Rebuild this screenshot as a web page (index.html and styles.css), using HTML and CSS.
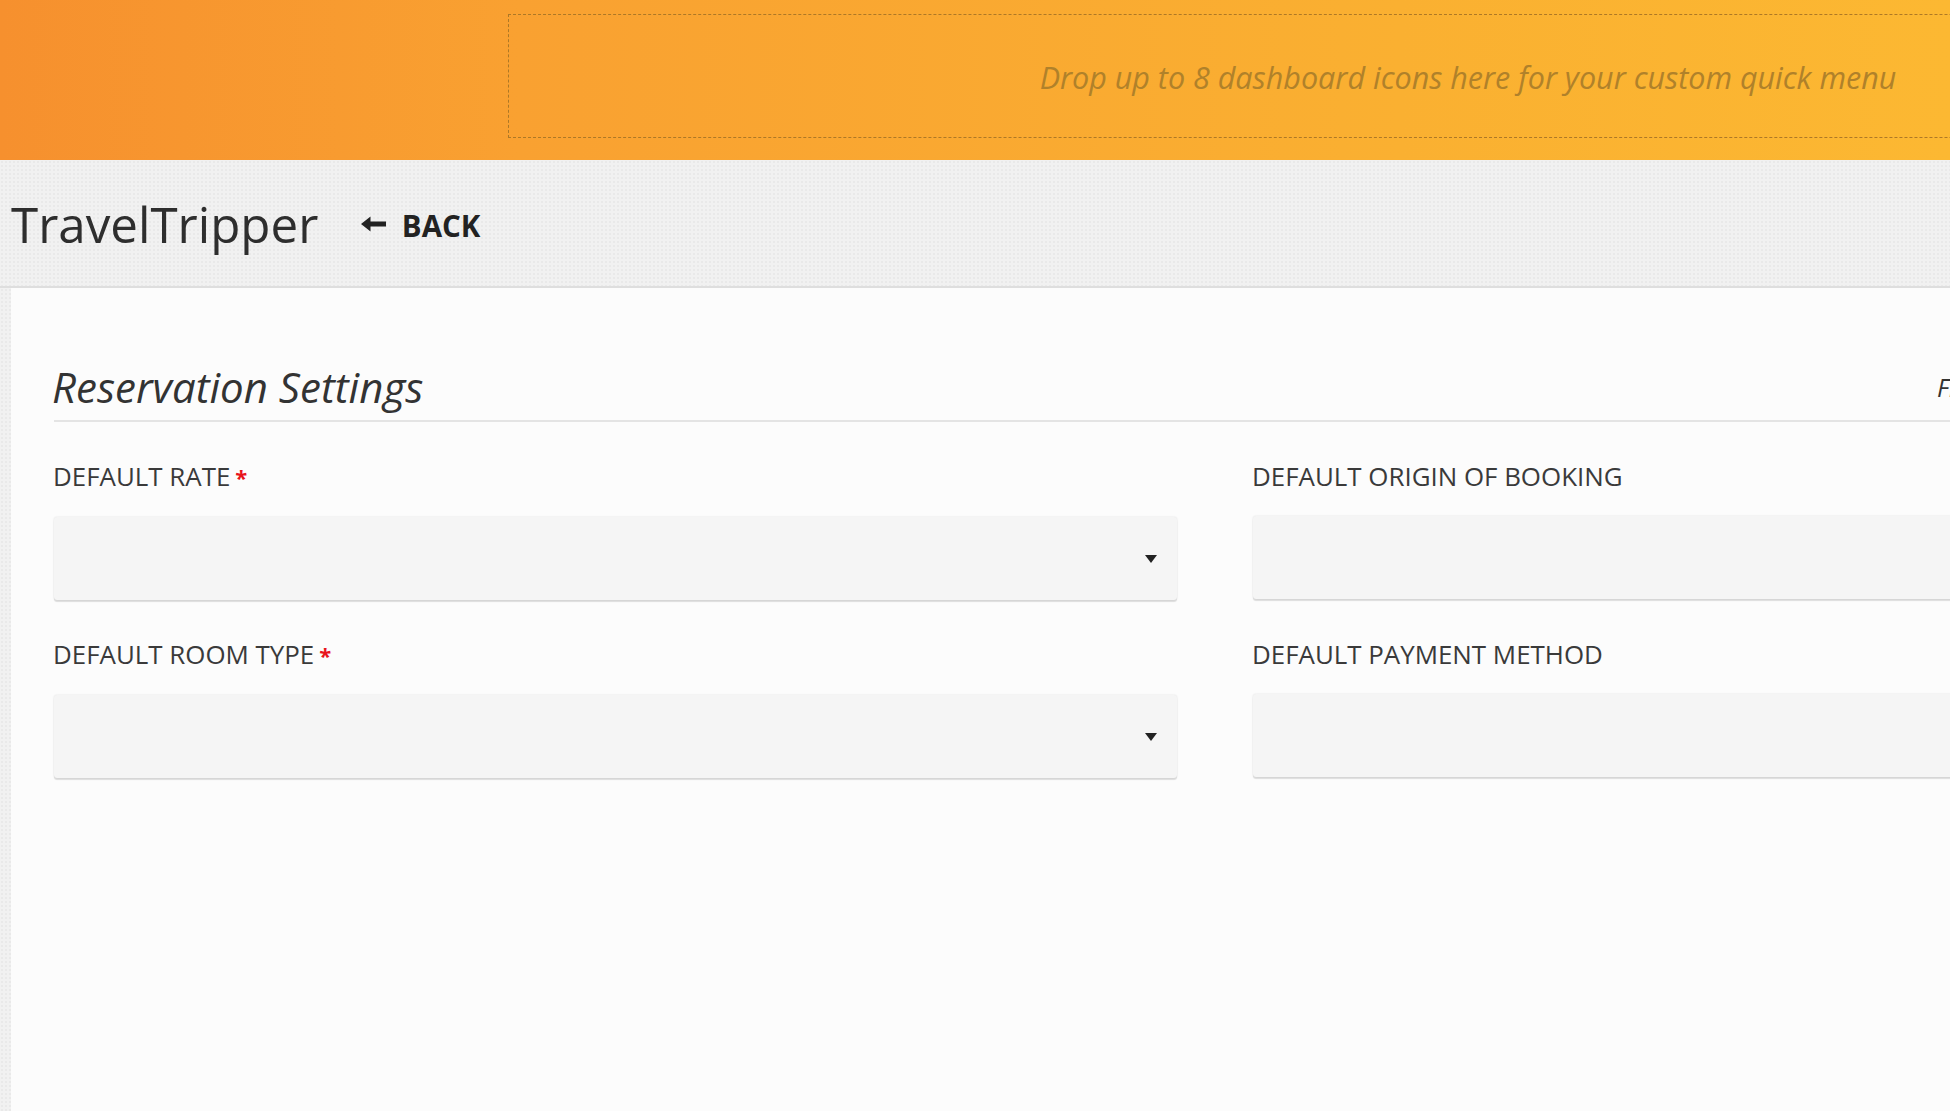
FILE: index.html
```html
<!DOCTYPE html>
<html lang="en">
<head>
<meta charset="utf-8">
<title>TravelTripper - Reservation Settings</title>
<link rel="stylesheet" href="styles.css">
</head>
<body>
<div class="page">
  <header class="quickbar">
    <div class="dropzone">
      <span class="dropzone-text">Drop up to 8 dashboard icons here for your custom quick menu</span>
    </div>
  </header>

  <div class="topbar">
    <h1 class="brand">TravelTripper</h1>
    <a class="back" href="#">
      <svg class="back-icon" viewBox="0 0 25 16" width="25" height="16" aria-hidden="true">
        <path d="M0 8 L9.5 0.5 L9.5 5.6 L25 5.6 L25 10.4 L9.5 10.4 L9.5 15.5 Z" fill="#222"/>
      </svg>
      <span>BACK</span>
    </a>
  </div>

  <main class="panel">
    <div class="section-head">
      <h2 class="section-title">Reservation Settings</h2>
      <span class="section-note">Fields marked with * are required</span>
    </div>

    <div class="form-grid">
      <div class="field">
        <label class="field-label">Default Rate<span class="req">*</span></label>
        <div class="select"><span class="caret"></span></div>
      </div>
      <div class="field">
        <label class="field-label">Default Origin of Booking</label>
        <div class="select"><span class="caret"></span></div>
      </div>
      <div class="field">
        <label class="field-label">Default Room Type<span class="req">*</span></label>
        <div class="select"><span class="caret"></span></div>
      </div>
      <div class="field">
        <label class="field-label">Default Payment Method</label>
        <div class="select"><span class="caret"></span></div>
      </div>
    </div>
  </main>
</div>
</body>
</html>
```

FILE: styles.css
```css
html, body {
  margin: 0;
  padding: 0;
  height: 100%;
  overflow: hidden;
  background: #f2f2f2;
}

body {
  font-family: "Open Sans", "Liberation Sans", sans-serif;
  color: #333;
}

.page {
  width: 2440px;
  min-height: 100vh;
  display: flex;
  flex-direction: column;
  background-color: #f1f1f1;
  background-image: radial-gradient(rgba(0, 0, 0, 0.03) 1px, transparent 1.2px);
  background-size: 4px 4px;
}

/* ---------- orange quick menu bar ---------- */
.quickbar {
  height: 160px;
  box-sizing: border-box;
  padding: 14px 12px 22px 508px;
  display: flex;
  background: linear-gradient(90deg, #f6902e 0px, #f9a131 520px, #fab031 1400px, #fcb832 1950px, #fcba33 2440px);
}

.dropzone {
  flex: 1;
  border: 1px dashed #ad7826;
  display: flex;
  align-items: center;
  justify-content: center;
}

.dropzone-text {
  font-style: italic;
  font-size: 30.5px;
  color: #b0812a;
  white-space: nowrap;
  padding-top: 2px;
}

/* ---------- gray top bar ---------- */
.topbar {
  height: 126px;
  box-sizing: content-box;
  border-bottom: 2px solid #dedede;
  display: flex;
  align-items: center;
  padding-left: 11px;
}

.brand {
  margin: 0;
  font-size: 49.3px;
  font-weight: 400;
  line-height: normal;
  color: #2e2e2e;
}

.back {
  display: inline-flex;
  align-items: center;
  margin-left: 42.5px;
  margin-top: 5px;
  text-decoration: none;
  color: #222;
  font-weight: 700;
  font-size: 29.5px;
  line-height: normal;
}

.back-icon {
  margin-right: 16px;
  margin-top: -4px;
}

/* ---------- content panel ---------- */
.panel {
  flex: 1;
  margin-left: 11px;
  background: #fcfcfc;
  padding: 70px 64px 0 43px;
}

.section-head {
  display: flex;
  align-items: center;
  justify-content: space-between;
  padding-bottom: 5px;
  border-bottom: 2px solid #e4e4e4;
}

.section-title {
  margin: 0 0 0 -2px;
  font-size: 42px;
  font-style: italic;
  font-weight: 400;
  line-height: normal;
  color: #333;
}

.section-note {
  width: 439px;
  font-size: 25px;
  font-style: italic;
  color: #333;
  line-height: normal;
  white-space: nowrap;
}

.form-grid {
  margin-top: 37px;
  display: grid;
  grid-template-columns: 1123px 1123px;
  column-gap: 76px;
  row-gap: 37px;
}

.field-label {
  display: block;
  margin: 0 0 23px -1px;
  font-size: 25.9px;
  line-height: 34px;
  text-transform: uppercase;
  color: #3a3a3a;
}

.req {
  color: #e8141c;
  font-weight: 700;
  font-size: 0.85em;
  margin-left: 5px;
}

.select {
  height: 83px;
  border-radius: 3px;
  background: #f5f5f5;
  box-shadow: 0 2px 1px rgba(0, 0, 0, 0.12), 0 0 2px rgba(0, 0, 0, 0.12);
  display: flex;
  align-items: center;
  justify-content: flex-end;
  padding-right: 20px;
}

.caret {
  width: 0;
  height: 0;
  border-left: 6px solid transparent;
  border-right: 6px solid transparent;
  border-top: 8px solid #222;
}
```
